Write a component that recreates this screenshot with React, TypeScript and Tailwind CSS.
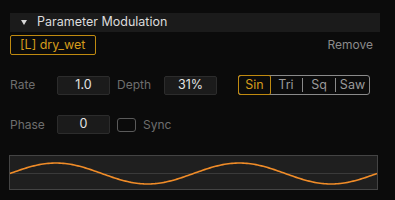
import React from "react";

const W = 367;
const H = 33;

function wavePoints() {
  const pts: string[] = [];
  const mid = 17.5;
  const amp = 10.5;
  for (let i = 0; i <= 200; i++) {
    const x = (i / 200) * W;
    const y = mid - amp * Math.sin((x / W) * Math.PI * 4);
    pts.push(`${x.toFixed(2)},${y.toFixed(2)}`);
  }
  return pts.join(" ");
}

function Field({ value }: { value: string }) {
  return (
    <div className="w-[53px] h-[19px] bg-[#1b1b1b] border border-[#2c2c2c] rounded-[2px] flex items-center justify-center text-[12.5px] text-[#e4e4e4]">
      {value}
    </div>
  );
}

export default function App() {
  return (
    <div
      className="w-[395px] h-[200px] bg-[#0b0b0b] pl-[10px] pt-[13px] overflow-hidden"
      style={{ fontFamily: "Inter, 'Noto Sans', sans-serif" }}
    >
      {/* header */}
      <div className="w-[370px] h-[19px] bg-[#1b1b1b] flex items-center pl-[11px]">
        <svg width="6" height="5" viewBox="0 0 6 5" className="mr-[10px]">
          <polygon points="0,0 6,0 3,5" fill="#d8d8d8" />
        </svg>
        <span className="text-[12.5px] text-[#dcdcdc]">Parameter Modulation</span>
      </div>

      {/* target row */}
      <div className="w-[370px] mt-[3px] h-[20px] flex items-center justify-between pr-[7px]">
        <div className="w-[86px] h-[20px] pl-[9px] border border-[#c08a10] rounded-[2px] flex items-center text-[12.5px] text-[#d49b1c]">
          [L] dry_wet
        </div>
        <span className="text-[12px] text-[#8a8a8a]">Remove</span>
      </div>

      {/* rate / depth / shape */}
      <div className="mt-[20px] h-[20px] flex items-center text-[12px] text-[#6e6e6e]">
        <span className="w-[47px]">Rate</span>
        <Field value="1.0" />
        <span className="w-[47px] ml-[7px]">Depth</span>
        <Field value="31%" />
        <div className="ml-[21px] h-[20px] flex items-stretch border border-[#8a8a8a] rounded-[3px] text-[12.5px]">
          <div className="w-[33px] -m-px border border-[#c08a10] rounded-[2px] flex items-center justify-center text-[#d49b1c]">
            Sin
          </div>
          <div className="w-[33px] flex items-center justify-center text-[#9a9a9a] border-r border-[#8a8a8a] my-[2px]">
            Tri
          </div>
          <div className="w-[33px] flex items-center justify-center text-[#9a9a9a] border-r border-[#8a8a8a] my-[2px]">
            Sq
          </div>
          <div className="w-[33px] flex items-center justify-center text-[#9a9a9a]">Saw</div>
        </div>
      </div>

      {/* phase / sync */}
      <div className="mt-[20px] h-[19px] flex items-center text-[12px] text-[#6e6e6e]">
        <span className="w-[47px]">Phase</span>
        <Field value="0" />
        <div className="ml-[7px] w-[19px] h-[14px] border border-[#5a5a5a] rounded-[3px]" />
        <span className="ml-[7px]">Sync</span>
      </div>

      {/* waveform */}
      <div className="mt-[21px] w-[367px] h-[33px] bg-[#1f1f1f] border border-[#444] relative box-content -ml-px">
        <svg width={W} height={H} viewBox={`0 0 ${W} ${H}`} className="block overflow-visible">
          <line x1="0" y1="17.5" x2={W} y2="17.5" stroke="#3a3a3a" strokeWidth="1" />
          <polyline points={wavePoints()} fill="none" stroke="#f08c28" strokeWidth="1.6" />
        </svg>
      </div>
    </div>
  );
}
